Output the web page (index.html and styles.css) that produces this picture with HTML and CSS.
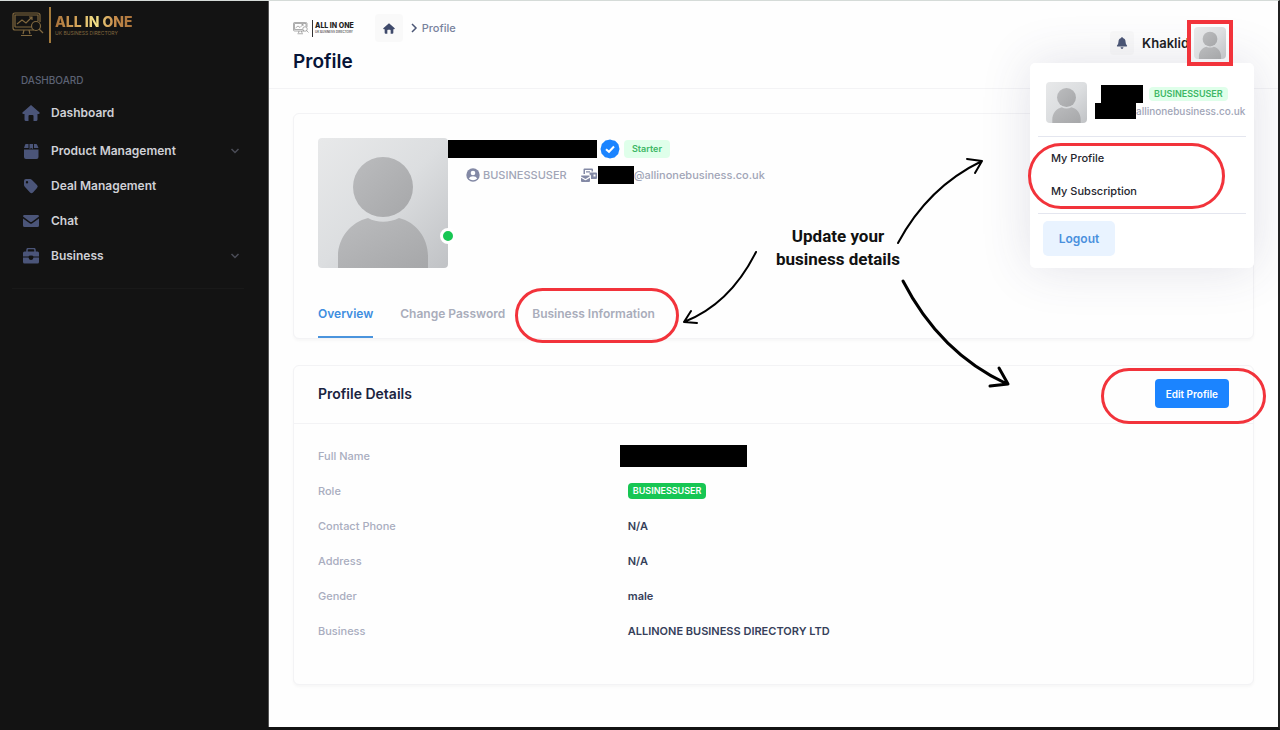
FILE: index.html
```html
<!DOCTYPE html>
<html lang="en">

<head>
	<title>Profile</title>
	<meta charset="UTF-8">
	<meta name="viewport" content="width=device-width, initial-scale=1.0">
	<link rel="stylesheet" href="styles.css">
</head>

<body>
	<!-- shared icons -->
	<svg class="defs" width="0" height="0">
		<defs>
			<linearGradient id="photo" x1="0" y1="0" x2="1" y2="1">
				<stop offset="0" stop-color="#e8e9ea" />
				<stop offset="0.5" stop-color="#dcdee0" />
				<stop offset="1" stop-color="#c0c2c5" />
			</linearGradient>
			<linearGradient id="person" x1="0" y1="0" x2="1" y2="1">
				<stop offset="0" stop-color="#bbbcbe" />
				<stop offset="1" stop-color="#a6a7a9" />
			</linearGradient>
			<symbol id="blank" viewBox="0 0 130 130">
				<rect width="130" height="130" fill="url(#photo)" />
				<path d="M20 130v-12c0-18 13-34 30-38 9 5 21 5 31 0 17 4 29 20 29 38v12z" fill="url(#person)" />
				<circle cx="65" cy="49" r="30" fill="url(#person)" />
			</symbol>
			<symbol id="house" viewBox="0 0 18 16">
				<path d="M9 0 17.6 7.5Q18 9 16.5 9H15.5V14.5Q15.5 16 14 16H11.500V11Q11.500 10 10.500 10H7.500Q6.500 10 6.500 11V16H4Q2.500 16 2.500 14.500V9H1.500Q0 9 .4 7.500z" fill="currentColor" />
			</symbol>
			<symbol id="monitor" viewBox="0 0 32 26">
				<g fill="none" stroke="currentColor" stroke-width="1.2">
					<path d="M22 18H3Q1 18 1 16V3Q1 1 3 1H25Q28 1 28 3V10M3 15V3H26V9M3 15H19" />
					<path d="M5 12l5-4 4 3 6-6M17 5h3v3M12 18l-1 4M17 18l1 4M9 23.500h11" />
					<circle cx="24" cy="14" r="4.500" />
					<path d="M27 17l4 4" />
				</g>
			</symbol>
			<symbol id="chevron" viewBox="0 0 10 10">
				<path d="M1.500 3 5 6.500 8.500 3" fill="none" stroke="currentColor" stroke-width="1.5" />
			</symbol>
		</defs>
	</svg>

	<div class="page">
		<aside class="sidebar">
			<a class="logo logo-gold" href="#">
				<svg class="logo-icon"><use href="#monitor" /></svg>
				<span class="logo-text">
					<span class="logo-name">ALL IN ONE</span>
					<span class="logo-sub">UK BUSINESS DIRECTORY</span>
				</span>
			</a>
			<nav class="menu">
				<div class="menu-heading">DASHBOARD</div>
				<a class="menu-item menu-first" href="#">
					<svg class="menu-icon"><use href="#house" /></svg>
					<span>Dashboard</span>
				</a>
				<a class="menu-item" href="#">
					<svg class="menu-icon" viewBox="0 0 18 16">
						<path d="M4 1H6.500V5H2L3 2Q3.200 1 4 1zM7.500 1H11V6L9.250 5 7.500 6zM12 1H14Q15 1 15.200 2L16.500 5H12zM2 6.500H16.500V14Q16.500 16 14.500 16H4Q2 16 2 14z" fill="currentColor" />
					</svg>
					<span>Product Management</span>
					<svg class="menu-arrow"><use href="#chevron" /></svg>
				</a>
				<a class="menu-item" href="#">
					<svg class="menu-icon" viewBox="0 0 18 16">
						<path d="M2 3Q2 1 4 1H8Q9 1 10 2L15 7Q16.500 8.500 15 10L11 14.500Q9.500 16 8 14.500L3 9Q2 8 2 7zM5 3A1.200 1.200 0 1 0 5 5.400 1.200 1.200 0 1 0 5 3z" fill="currentColor" />
					</svg>
					<span>Deal Management</span>
				</a>
				<a class="menu-item" href="#">
					<svg class="menu-icon" viewBox="0 0 18 16">
						<path d="M2 2H16Q17 2 17 3.500L10 8.700Q9 9.300 8 8.700L1 3.500Q1 2 2 2zM1 5.500 8 10.500Q9 11 10 10.500L17 5.500V12.500Q17 14 15.500 14H2.500Q1 14 1 12.500z" fill="currentColor" />
					</svg>
					<span>Chat</span>
				</a>
				<a class="menu-item" href="#">
					<svg class="menu-icon" viewBox="0 0 18 16">
						<path d="M5 4V2Q5 .5 6.500 .5H11.500Q13 .5 13 2V4" fill="none" stroke="currentColor" stroke-width="1.5" />
						<path d="M2.500 3.500H15.500Q17 3.500 17 5V8.500H11.500Q11.500 7.500 9 7.500T6.500 8.500H1V5Q1 3.500 2.500 3.500zM1 9.500H6.500Q7 12 9 12T11.500 9.500H17V14Q17 15.500 15.500 15.500H2.500Q1 15.500 1 14z" fill="currentColor" />
					</svg>
					<span>Business</span>
					<svg class="menu-arrow"><use href="#chevron" /></svg>
				</a>
			</nav>
		</aside>

		<main class="main">
			<header class="header">
				<div class="header-left">
					<nav class="breadcrumb">
						<a class="logo logo-dark" href="#">
							<svg class="logo-icon"><use href="#monitor" /></svg>
							<span class="logo-text">
								<span class="logo-name">ALL IN ONE</span>
								<span class="logo-sub">UK BUSINESS DIRECTORY</span>
							</span>
						</a>
						<a class="home-link" href="#" aria-label="Home"><svg class="home-icon"><use href="#house" /></svg></a>
						<svg class="crumb-arrow" viewBox="0 0 10 10">
							<path d="M3 1l4 4-4 4" fill="none" stroke="currentColor" stroke-width="1.5" />
						</svg>
						<span class="crumb">Profile</span>
					</nav>
					<h1 class="title">Profile</h1>
				</div>
				<div class="user">
					<button class="bell" type="button" aria-label="Notifications">
						<svg class="bell-icon" viewBox="0 0 12 12">
							<path d="M6 0Q6.800 0 6.800 .9Q9.500 1.500 9.500 4.500Q9.500 7 11 8.500Q11.500 9.500 10.500 9.500H1.500Q.5 9.500 1 8.500Q2.500 7 2.500 4.500Q2.500 1.500 5.200 .9Q5.200 0 6 0zM4.500 10.300H7.500Q7.200 12 6 12T4.500 10.300z" fill="currentColor" />
						</svg>
					</button>
					<span class="user-name">Khaklid</span>
					<div class="user-photo">
						<svg class="avatar avatar-sm"><use href="#blank" /></svg>
						<span class="mark mark-photo"></span>
					</div>
				</div>

				<div class="dropdown">
					<div class="account">
						<svg class="avatar avatar-md"><use href="#blank" /></svg>
						<div class="account-info">
							<div class="account-line">
								<span class="redacted redacted-first"></span>
								<span class="badge badge-light">BUSINESSUSER</span>
							</div>
							<div class="account-line account-mail">
								<span class="redacted redacted-user"></span>
								<span>allinonebusiness.co.uk</span>
							</div>
						</div>
					</div>
					<div class="dropdown-links">
						<a href="#">My Profile</a>
						<a href="#">My Subscription</a>
						<span class="mark mark-links"></span>
					</div>
					<button class="logout" type="button">Logout</button>
				</div>
			</header>

			<div class="content">
				<section class="card">
					<div class="profile">
						<div class="photo">
							<svg class="avatar avatar-lg"><use href="#blank" /></svg>
							<span class="online"></span>
						</div>
						<div class="profile-info">
							<div class="profile-line">
								<span class="redacted redacted-name"></span>
								<svg class="verified" viewBox="0 0 20 20">
									<path d="M10 .5 12.500 1.300 15 1.700 16.800 3.500 18.500 5.500 19 8 19.500 10 18.800 12.500 18.200 15 16.300 16.800 14.500 18.500 12 19 10 19.500 7.500 18.800 5 18.200 3.200 16.300 1.500 14.500 1 12 .5 10 1.200 7.500 1.800 5 3.700 3.200 5.500 1.500 8 1z" fill="#1b84ff" />
									<path d="M6 10.200 9 12.800 14 7.500" fill="none" stroke="#fff" stroke-width="2" />
								</svg>
								<span class="badge badge-light badge-plan">Starter</span>
							</div>
							<div class="profile-line profile-meta">
								<svg class="meta-icon" viewBox="0 0 14 14">
									<circle cx="7" cy="7" r="6.7" fill="currentColor" />
									<circle cx="7" cy="5" r="2.3" fill="#fff" />
									<path d="M2.800 10.600Q4 8.300 7 8.300T11.200 10.600Q9.500 12.300 7 12.300T2.800 10.600z" fill="#fff" />
								</svg>
								<span>BUSINESSUSER</span>
								<svg class="mail-icon" viewBox="0 0 16 14">
									<path d="M2.500 6V1.500Q2.500 .5 3.500 .5H11Q12 .5 12 1.500V3.500H10.500V2H4V6zM5 3.200H9V4.500H5zM9.500 4.500H15Q16 4.500 16 5.500V10Q16 11 15 11H10V8Q10 6.500 8.500 6.500V5.500Q8.500 4.500 9.500 4.500zM12.500 6.500V8.500H14.500V6.500zM.5 7.500H8.500V8.500L5 10.800Q4.500 11 4 10.800L0 8.500Q0 7.500 .5 7.500zM0 9.800 3.800 12Q4.500 12.300 5.200 12L9 9.800V13Q9 14 8 14H1Q0 14 0 13z" fill="currentColor" />
								</svg>
								<span class="redacted redacted-mail"></span>
								<span>@allinonebusiness.co.uk</span>
							</div>
						</div>
					</div>
					<nav class="tabs">
						<a class="tab active" href="#">Overview</a>
						<a class="tab" href="#">Change Password</a>
						<a class="tab" href="#">Business Information<span class="mark mark-tab"></span></a>
					</nav>
				</section>

				<section class="card">
					<div class="card-header">
						<h2 class="card-title">Profile Details</h2>
						<div class="card-action">
							<button class="btn" type="button">Edit Profile</button>
							<span class="mark mark-edit"></span>
						</div>
					</div>
					<dl class="details">
						<dt>Full Name</dt>
						<dd><span class="redacted redacted-full"></span></dd>
						<dt>Role</dt>
						<dd><span class="badge badge-success">BUSINESSUSER</span></dd>
						<dt>Contact Phone</dt>
						<dd>N/A</dd>
						<dt>Address</dt>
						<dd>N/A</dd>
						<dt>Gender</dt>
						<dd>male</dd>
						<dt>Business</dt>
						<dd>ALLINONE BUSINESS DIRECTORY LTD</dd>
					</dl>
				</section>
			</div>

			<!-- callout over the page -->
			<div class="callout">
				<svg class="arrows" viewBox="0 0 340 250" fill="none" stroke="#000" stroke-linecap="round" stroke-linejoin="round">
					<path d="M76 102Q50 154 4 172M11 161 4 172 17 173" stroke-width="2" />
					<path d="M218 93Q248 37 302 11M287 9 302 11 295 23" stroke-width="2" />
					<path d="M223 131Q260 203 327 234M319 218 328 234 310 236" stroke-width="3" />
				</svg>
				<p class="callout-text">Update your<br>business details</p>
			</div>
		</main>
	</div>
</body>

</html>
```

FILE: styles.css
```css
* {
	box-sizing: border-box;
}

body {
	margin: 0;
	background-color: #131313;
	font-family: Inter, "Liberation Sans", sans-serif;
	font-size: 12px;
	color: #071437;
}

a {
	color: inherit;
	text-decoration: none;
}

button {
	border: none;
	font-family: inherit;
	cursor: pointer;
}

svg {
	display: block;
	flex-shrink: 0;
}

.defs {
	position: absolute;
}

.page {
	display: flex;
	min-height: 100vh;
	border-top: 1px solid #d5dbd8;
	border-right: 2px solid #202020;
	border-bottom: 3px solid #131313;
}

/* Sidebar */
.sidebar {
	width: 269px;
	flex-shrink: 0;
	padding: 6px 24px 0 12px;
	border-right: 1px solid #555;
}

.logo {
	display: flex;
	align-items: center;
}

.logo-text {
	display: flex;
	flex-direction: column;
	justify-content: center;
	border-left: 2px solid #a27a3c;
}

.logo-name {
	font-weight: 800;
	white-space: nowrap;
}

.logo-sub {
	white-space: nowrap;
}

.logo-gold {
	gap: 5px;
	color: #80683f;
}

.logo-gold .logo-icon {
	width: 32px;
	height: 26px;
}

.logo-gold .logo-text {
	height: 36px;
	padding-left: 4px;
}

.logo-gold .logo-name {
	font-size: 14px;
	line-height: 16px;
	background: linear-gradient(90deg, #a8713a, #d8a95c 30%, #f5e48a 52%, #c98f4e 75%, #a8713a);
	-webkit-background-clip: text;
	background-clip: text;
	color: transparent;
}

.logo-gold .logo-sub {
	font-size: 5px;
	line-height: 6px;
}

.menu {
	padding-bottom: 15px;
	border-bottom: 1px solid #191919;
}

.menu-heading {
	margin: 28px 0 6px 9px;
	font-size: 10px;
	line-height: 18px;
	font-weight: 500;
	color: #5c6274;
}

.menu-item {
	display: flex;
	align-items: center;
	height: 35px;
	padding: 0 4px 0 10px;
	gap: 11px;
	font-weight: 600;
	color: #cfd0d6;
}

.menu-first {
	margin-bottom: 3px;
}

.menu-icon {
	width: 18px;
	height: 16px;
	color: #4b5579;
}

.menu-arrow {
	width: 10px;
	height: 10px;
	margin-left: auto;
	color: #4a4c56;
}

/* Header */
.main {
	position: relative;
	flex: 1;
	min-width: 0;
	background-color: #fefefe;
}

.header {
	position: relative;
	display: flex;
	justify-content: space-between;
	height: 88px;
	padding: 13px 24px 0;
	border-bottom: 1px solid #f3f3f5;
}

.breadcrumb {
	display: flex;
	align-items: center;
	height: 28px;
	color: #78829d;
	font-weight: 500;
	font-size: 11px;
}

.logo-dark {
	gap: 3px;
	color: #333;
}

.logo-dark .logo-icon {
	width: 16px;
	height: 13px;
	color: #777;
}

.logo-dark .logo-text {
	height: 17px;
	padding-left: 2px;
	border-left: 1px solid #333;
}

.logo-dark .logo-name {
	font-size: 7px;
	line-height: 8px;
	color: #222;
}

.logo-dark .logo-sub {
	font-size: 3px;
	line-height: 4px;
}

.home-link {
	display: flex;
	align-items: center;
	justify-content: center;
	width: 28px;
	height: 28px;
	margin: 0 6px 0 21px;
	border-radius: 4px;
	background-color: #f9f9f9;
	color: #3f4a6b;
}

.home-icon {
	width: 12px;
	height: 11px;
}

.crumb-arrow {
	width: 10px;
	height: 10px;
	margin-right: 3px;
	color: #4b5675;
}

.title {
	margin: 8px 0 0;
	font-size: 19px;
	line-height: 24px;
	font-weight: 600;
}

.user {
	display: flex;
	align-items: center;
	height: 58px;
	padding-right: 28px;
}

.bell {
	display: flex;
	align-items: center;
	justify-content: center;
	width: 24px;
	height: 24px;
	margin-right: 8px;
	padding: 0;
	border-radius: 4px;
	background-color: #f9f9f9;
	color: #4b5675;
}

.bell-icon {
	width: 12px;
	height: 12px;
}

.user-name {
	font-size: 13px;
	font-weight: 600;
	color: #1c1c22;
}

.user-photo {
	position: relative;
	z-index: 3;
	margin-left: 5px;
}

.avatar {
	border-radius: 4px;
}

.avatar-sm {
	width: 32px;
	height: 32px;
}

.avatar-md {
	width: 41px;
	height: 41px;
}

.avatar-lg {
	width: 130px;
	height: 130px;
}

/* Account dropdown */
.dropdown {
	position: absolute;
	z-index: 2;
	top: 62px;
	right: 24px;
	width: 224px;
	padding: 19px 8px 12px;
	border-radius: 5px;
	background-color: #fff;
	box-shadow: 0 0 50px rgba(60, 63, 105, 0.15);
}

.account {
	display: flex;
	padding: 0 0 13px 8px;
	gap: 8px;
}

.account-info {
	padding-top: 3px;
}

.account-line {
	display: flex;
	align-items: center;
	height: 18px;
}

.account-mail {
	height: 16px;
	font-size: 10px;
	font-weight: 500;
	color: #a1a5b7;
}

.dropdown-links {
	position: relative;
	padding: 5px 13px;
	border-top: 1px solid #e4e6ef;
	border-bottom: 1px solid #e4e6ef;
	font-size: 11px;
	font-weight: 500;
}

.dropdown-links a {
	display: block;
	line-height: 33px;
	color: #25262e;
}

.logout {
	display: block;
	width: 72px;
	height: 35px;
	margin: 7px 0 0 5px;
	border-radius: 5px;
	background-color: #e9f3ff;
	font-size: 12px;
	font-weight: 600;
	color: #4a90dd;
}

/* Blacked out names */
.redacted {
	flex-shrink: 0;
	background-color: #000;
}

.redacted-first {
	width: 42px;
	height: 18px;
	margin: 0 6px;
}

.redacted-user {
	width: 41px;
	height: 16px;
}

.redacted-name {
	width: 149px;
	height: 18px;
}

.redacted-mail {
	width: 36px;
	height: 18px;
}

.redacted-full {
	width: 127px;
	height: 22px;
	margin-left: -8px;
}

/* Badges */
.badge {
	border-radius: 4px;
	font-size: 9px;
	line-height: 14px;
	font-weight: 600;
	padding: 0 5px;
}

.badge-light {
	background-color: #dfffea;
	color: #3db765;
}

.badge-plan {
	line-height: 18px;
	padding: 0 8px;
}

.badge-success {
	background-color: #17c653;
	color: #fff;
	line-height: 16px;
}

/* Cards */
.content {
	display: flex;
	flex-direction: column;
	gap: 26px;
	padding: 24px;
}

.card {
	border: 1px solid #f3f3f5;
	border-radius: 6px;
	background-color: #fefefe;
	box-shadow: 0 2px 3px rgba(0, 0, 0, 0.03);
}

.profile {
	display: flex;
	padding: 24px 24px 0;
}

.photo {
	position: relative;
}

.online {
	position: absolute;
	right: -8px;
	bottom: 24px;
	width: 16px;
	height: 16px;
	border: 3px solid #fff;
	border-radius: 50%;
	background-color: #17c653;
}

.profile-line {
	display: flex;
	align-items: center;
	height: 22px;
}

.verified {
	width: 20px;
	height: 20px;
	margin: 0 4px 0 3px;
}

.profile-meta {
	height: 30px;
	padding-left: 18px;
	font-size: 11px;
	font-weight: 500;
	color: #a1a5b7;
}

.meta-icon {
	width: 14px;
	height: 14px;
	margin-right: 3px;
	color: #8389a5;
}

.mail-icon {
	width: 16px;
	height: 14px;
	margin: 0 1px 0 14px;
	color: #8389a5;
}

.tabs {
	display: flex;
	gap: 27px;
	padding: 24px 24px 0;
	font-weight: 600;
	color: #a9adbb;
}

.tab {
	position: relative;
	line-height: 44px;
	border-bottom: 2px solid transparent;
}

.tab.active {
	border-color: #4a94dd;
	color: #3f8ee0;
}

.card-header {
	display: flex;
	align-items: center;
	justify-content: space-between;
	height: 58px;
	padding: 0 24px 2px;
	border-bottom: 1px solid #f3f3f5;
}

.card-title {
	margin: 0;
	font-size: 14px;
	font-weight: 600;
	color: #1b2440;
}

.card-action {
	position: relative;
}

.btn {
	display: block;
	height: 29px;
	padding: 0 11px;
	border-radius: 4px;
	background-color: #1b84ff;
	font-size: 10px;
	font-weight: 600;
	color: #fff;
}

.details {
	display: grid;
	grid-template-columns: 34% 66%;
	grid-auto-rows: 35px;
	align-items: center;
	margin: 0;
	padding: 14px 24px 36px;
	font-size: 11px;
}

.details dt {
	font-weight: 500;
	color: #a9adbf;
}

.details dd {
	display: flex;
	margin: 0;
	font-weight: 600;
	color: #363f5a;
}

/* Red marks */
.mark {
	position: absolute;
	border: 3px solid #f2333b;
	border-radius: 28px;
	pointer-events: none;
}

.mark-photo {
	inset: -7px;
	border-width: 4px;
	border-radius: 0;
}

.mark-links {
	inset: 6px 21px 4px -10px;
	border-radius: 34px;
}

.mark-tab {
	inset: -4px -24px -7px -17px;
}

.mark-edit {
	inset: -11px -37px -16px -54px;
}

/* Callout */
.callout {
	position: absolute;
	z-index: 3;
	top: 149px;
	left: 411px;
	width: 340px;
	height: 250px;
	pointer-events: none;
}

.arrows {
	width: 340px;
	height: 250px;
}

.callout-text {
	position: absolute;
	top: 75px;
	left: 80px;
	width: 156px;
	margin: 0;
	font-family: Roboto, sans-serif;
	font-size: 17px;
	line-height: 23px;
	font-weight: 700;
	text-align: center;
	color: #111;
}
```
